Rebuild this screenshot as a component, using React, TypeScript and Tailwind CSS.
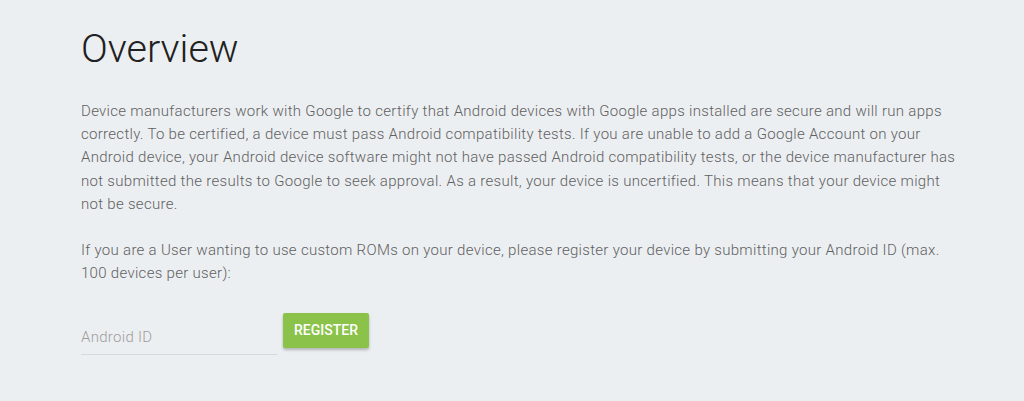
export default function App() {
  return (
    <div className="min-h-[401px] bg-[#eceff1] font-['Roboto',sans-serif]">
      <div className="pl-[81px] pr-[50px] pt-[23px]">
        <h1 className="text-[39.5px] leading-[52px] font-light text-[#212121]">Overview</h1>

        <p className="mt-[25px] text-[15px] leading-[23.2px] tracking-[0.3px] font-light text-[#5f6163] max-w-[882px]">
          Device manufacturers work with Google to certify that Android devices with Google apps installed are secure and will run apps
          correctly. To be certified, a device must pass Android compatibility tests. If you are unable to add a Google Account on your
          Android device, your Android device software might not have passed Android compatibility tests, or the device manufacturer has
          not submitted the results to Google to seek approval. As a result, your device is uncertified. This means that your device might
          not be secure.
        </p>

        <p className="mt-[23px] text-[15px] leading-[23.2px] tracking-[0.3px] font-light text-[#5f6163] max-w-[882px]">
          If you are a User wanting to use custom ROMs on your device, please register your device by submitting your Android ID (max.
          100 devices per user):
        </p>

        <div className="mt-[28px] flex items-start gap-[6px]">
          <input
            type="text"
            placeholder="Android ID"
            className="w-[196px] h-[36px] mt-[6px] bg-transparent border-b border-[#d6d9db] text-[15px] tracking-[0.3px] font-light text-[#424242] placeholder:text-[#9e9e9e] outline-none"
          />
          <button className="h-[35px] px-[11px] rounded-[2px] bg-[#8bc34a] text-white text-[14px] font-medium uppercase shadow-[0_2px_3px_rgba(0,0,0,0.25)]">
            Register
          </button>
        </div>
      </div>
    </div>
  )
}
